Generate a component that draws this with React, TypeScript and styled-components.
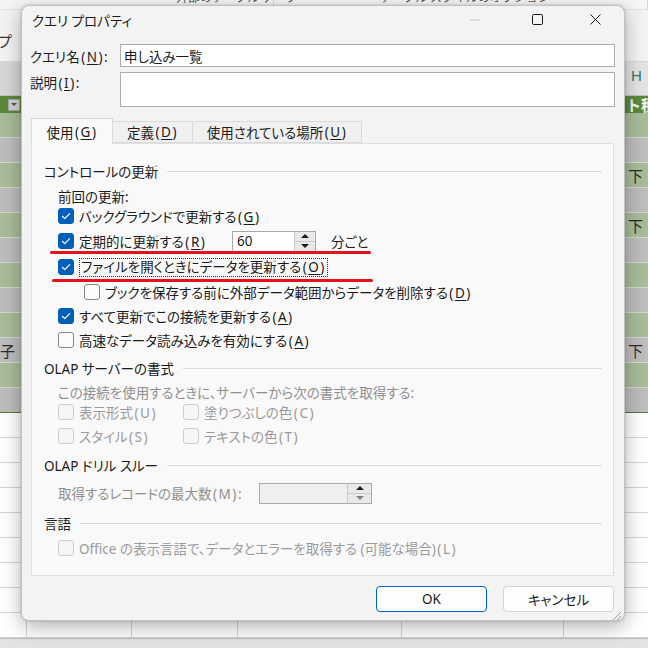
import React from "react";
import styled, { createGlobalStyle } from "styled-components";

const Global = createGlobalStyle`
  html, body { margin: 0; padding: 0; }
  body {
    width: 648px; height: 648px; overflow: hidden;
    font-family: "Noto Sans", "Noto Sans CJK JP", sans-serif;
    color: #1b1b1b;
  }
`;

const Page = styled.div`
  position: relative;
  width: 648px;
  height: 648px;
  overflow: hidden;
  background: #fff;
`;

/* ---------- background spreadsheet ---------- */
const Sheet = styled.div`
  display: flex;
  flex-direction: column;
  width: 648px;
  font-family: "Noto Sans CJK JP", sans-serif;
`;

const Ribbon = styled.div`
  display: flex;
  height: 9px;
  background: #f5f5f5;
  border-bottom: 1px solid #e1e1e1;
  overflow: hidden;
`;

const RibbonGroup = styled.div<{ $w: number; $pad: number }>`
  width: ${(p) => p.$w}px;
  padding-left: ${(p) => p.$pad}px;
  box-sizing: border-box;
  border-right: 1px solid #d6d6d6;
  font-size: 12px;
  line-height: 16px;
  color: #5a5a5a;
  white-space: nowrap;
  margin-top: -11px;
  height: 20px;
`;

const RibbonBar = styled.div`
  height: 52px;
  background: #f3f3f3;
  border-bottom: 1px solid #d8d8d8;
  box-sizing: border-box;
  font-size: 15px;
  line-height: 18px;
  padding-top: 22px;
  margin-left: -3px;
  color: #333;
`;

const ColHeader = styled.div`
  height: 34px;
  background: #d7d7d7;
  display: flex;
  justify-content: flex-end;
  align-items: center;
  border-bottom: 1px solid #c4c4c4;
  box-sizing: border-box;
`;

const ColLetter = styled.div`
  width: 22px;
  height: 100%;
  background: #e4e4e4;
  color: #2a7a63;
  font-family: "Liberation Sans", sans-serif;
  font-size: 15px;
  display: flex;
  align-items: center;
  padding-left: 5px;
  padding-bottom: 6px;
  box-sizing: border-box;
`;

const TableHeader = styled.div`
  height: 17px;
  background: #5b893b;
  display: flex;
  justify-content: space-between;
  align-items: center;
  overflow: hidden;
`;

const DropBtn = styled.div`
  width: 12px;
  height: 12px;
  margin-left: 8px;
  background: #d2d2d2;
  border: 1px solid #a5a5a5;
  box-sizing: border-box;
  display: flex;
  align-items: center;
  justify-content: center;
  &::after {
    content: "";
    border-left: 3px solid transparent;
    border-right: 3px solid transparent;
    border-top: 3px solid #555;
  }
`;

const HeaderText = styled.div`
  width: 22px;
  color: #f4f4f4;
  font-size: 15px;
  font-weight: 700;
  line-height: 17px;
  white-space: nowrap;
  overflow: hidden;
  padding-left: 2px;
`;

const BandRow = styled.div<{ $alt: boolean }>`
  height: 25px;
  box-sizing: border-box;
  background: ${(p) => (p.$alt ? "#bdbdbd" : "#a8bc9a")};
  border-bottom: 1px solid #d3dccc;
  display: flex;
  justify-content: space-between;
  align-items: center;
  font-size: 15px;
  color: #2a2a2a;
  &:last-child {
    border-bottom: 1px solid #4f7d34;
  }
`;

const BandCell = styled.div<{ $w: number }>`
  width: ${(p) => p.$w}px;
  overflow: hidden;
  white-space: nowrap;
`;

const GridRow = styled.div`
  height: 25px;
  display: flex;
  box-sizing: border-box;
  border-bottom: 1px solid #d4d4d4;
`;

const GridCell = styled.div<{ $w: number }>`
  width: ${(p) => p.$w}px;
  border-right: 1px solid #d4d4d4;
  box-sizing: border-box;
  &:last-child { border-right: none; }
`;

const SheetFooter = styled.div`
  height: 10px;
  background: #e3e3e3;
  border-top: 1px solid #bcbcbc;
`;

/* ---------- dialog ---------- */
const Dialog = styled.div`
  position: absolute;
  left: 21px;
  top: 5px;
  width: 604px;
  height: 616px;
  box-sizing: border-box;
  background: #f3f3f3;
  border: 1px solid #c2c2c2;
  border-radius: 8px;
  box-shadow: 0 6px 20px rgba(0, 0, 0, 0.3), 0 0 3px rgba(0, 0, 0, 0.18);
  display: flex;
  flex-direction: column;
  font-size: 13.5px;
  font-feature-settings: "palt" 1;
`;

const TitleBar = styled.div`
  height: 27px;
  display: flex;
  align-items: center;
  padding-left: 10px;
`;

const Title = styled.div`
  flex: 1;
  font-size: 13.5px;
  color: #1b1b1b;
`;

const CaptionBtn = styled.div<{ $w: number }>`
  width: ${(p) => p.$w}px;
  height: 27px;
  display: flex;
  align-items: center;
  justify-content: center;
`;

const Body = styled.div`
  flex: 1;
  display: flex;
  flex-direction: column;
  padding: 11px 9px 0 8px;
`;

const FieldRow = styled.div<{ $mt?: number }>`
  display: grid;
  grid-template-columns: 90px 1fr;
  margin-top: ${(p) => p.$mt ?? 0}px;
`;

const FieldLabel = styled.div<{ $top?: boolean }>`
  display: flex;
  align-items: ${(p) => (p.$top ? "flex-start" : "center")};
  white-space: nowrap;
`;

const TextBox = styled.div<{ $h: number }>`
  height: ${(p) => p.$h}px;
  box-sizing: border-box;
  background: #fff;
  border: 1px solid #acacac;
  padding-left: 3px;
  display: flex;
  align-items: center;
`;

const Ak = styled.span`
  text-decoration: underline;
  text-underline-offset: 2px;
  text-decoration-thickness: 1px;
`;

const KeyWrap = styled.span`
  letter-spacing: 1.5px;
  margin-left: 1.5px;
`;

const Key: React.FC<{ k: string }> = ({ k }) => (
  <KeyWrap>
    (<Ak>{k}</Ak>)
  </KeyWrap>
);

const TabArea = styled.div`
  margin: 11px 1px 0 1px;
  display: flex;
  flex-direction: column;
`;

const TabStrip = styled.div`
  display: flex;
  align-items: flex-end;
  height: 25px;
  position: relative;
  z-index: 1;
`;

const Tab = styled.div<{ $w: number; $active?: boolean }>`
  width: ${(p) => p.$w}px;
  height: ${(p) => (p.$active ? 26 : 22)}px;
  box-sizing: border-box;
  margin-bottom: ${(p) => (p.$active ? -1 : 0)}px;
  background: ${(p) => (p.$active ? "#f9f9f9" : "#f0f0f0")};
  border: 1px solid #dadada;
  border-bottom: ${(p) => (p.$active ? "none" : "1px solid #dadada")};
  margin-left: ${(p) => (p.$active ? 0 : -1)}px;
  display: flex;
  align-items: center;
  justify-content: center;
  white-space: nowrap;
  padding-top: ${(p) => (p.$active ? 1 : 0)}px;
`;

const Panel = styled.div`
  height: 433px;
  box-sizing: border-box;
  background: #f9f9f9;
  border: 1px solid #e0e0e0;
  padding: 17px 11px 0 12px;
  display: flex;
  flex-direction: column;
`;

const Row = styled.div<{ $mt?: number; $indent?: number; $muted?: boolean }>`
  height: 20px;
  margin-top: ${(p) => p.$mt ?? 0}px;
  margin-left: ${(p) => p.$indent ?? 0}px;
  display: flex;
  align-items: center;
  white-space: nowrap;
  color: ${(p) => (p.$muted ? "#8f8f8f" : "#1b1b1b")};
`;

const GroupLabel = styled(Row)`
  &::after {
    content: "";
    flex: 1;
    height: 0;
    border-top: 1px solid #dcdcdc;
    margin-left: 9px;
  }
`;

const CheckItem = styled.div<{ $disabled?: boolean; $w?: number }>`
  display: flex;
  align-items: center;
  gap: 5px;
  width: ${(p) => (p.$w ? `${p.$w}px` : "auto")};
  color: ${(p) => (p.$disabled ? "#9a9a9a" : "#1b1b1b")};
`;

const Box = styled.span<{ $checked?: boolean; $disabled?: boolean }>`
  width: 16px;
  height: 16px;
  box-sizing: border-box;
  border-radius: 3px;
  flex-shrink: 0;
  display: flex;
  align-items: center;
  justify-content: center;
  background: ${(p) => (p.$checked ? "#005fb8" : p.$disabled ? "#f6f6f6" : "#fbfbfb")};
  border: 1px solid
    ${(p) => (p.$checked ? "#005fb8" : p.$disabled ? "#cdcdcd" : "#878787")};
`;

const Focus = styled.span`
  border: 1px dotted #2a2a2a;
  padding: 0 1px;
  line-height: 17px;
`;

const Spin = styled.div<{ $w: number; $disabled?: boolean }>`
  width: ${(p) => p.$w}px;
  height: 21px;
  box-sizing: border-box;
  border: 1px solid #a9a9a9;
  background: ${(p) => (p.$disabled ? "#efefef" : "#fff")};
  display: flex;
`;

const SpinValue = styled.div`
  flex: 1;
  display: flex;
  align-items: center;
  padding-left: 4px;
  font-size: 13.5px;
`;

const SpinButtons = styled.div<{ $w: number }>`
  width: ${(p) => p.$w}px;
  display: flex;
  flex-direction: column;
  border-left: 1px solid #c9c9c9;
`;

const SpinBtn = styled.div<{ $up?: boolean; $gray?: boolean }>`
  flex: 1;
  background: #e9e9e9;
  border-top: ${(p) => (p.$up ? "none" : "1px solid #c9c9c9")};
  display: flex;
  align-items: center;
  justify-content: center;
  &::after {
    content: "";
    border-left: 4px solid transparent;
    border-right: 4px solid transparent;
    ${(p) =>
      p.$up
        ? `border-bottom: 4px solid ${p.$gray ? "#6d6d6d" : "#1a1a1a"};`
        : `border-top: 4px solid ${p.$gray ? "#7d7d7d" : "#1a1a1a"};`}
  }
`;

const Unit = styled.span`
  margin-left: 15px;
`;

const FixedLabel = styled.div<{ $w: number }>`
  width: ${(p) => p.$w}px;
`;

const ButtonRow = styled.div`
  display: flex;
  justify-content: flex-end;
  gap: 16px;
  margin: 10px 1px 0 0;
`;

const Button = styled.div<{ $primary?: boolean }>`
  width: 111px;
  height: 26px;
  box-sizing: border-box;
  border-radius: 4px;
  background: #fdfdfd;
  border: 1px solid ${(p) => (p.$primary ? "#0067c0" : "#d3d3d3")};
  display: flex;
  align-items: center;
  justify-content: center;
`;

const Grip = styled.div`
  position: absolute;
  right: 2px;
  bottom: 2px;
  width: 11px;
  height: 11px;
`;

const RedLine = styled.div`
  position: absolute;
  height: 3px;
  border-radius: 2px;
  background: #e3121b;
`;

const Check = () => (
  <svg width="12" height="12" viewBox="0 0 12 12">
    <path d="M2.4 6.3 L4.8 8.6 L9.6 3.6" fill="none" stroke="#fff" strokeWidth="1.2" strokeLinecap="round" strokeLinejoin="round" />
  </svg>
);

const CB: React.FC<{ checked?: boolean; disabled?: boolean; w?: number; children: React.ReactNode }> = ({
  checked,
  disabled,
  w,
  children,
}) => (
  <CheckItem $disabled={disabled} $w={w}>
    <Box $checked={checked} $disabled={disabled}>{checked && <Check />}</Box>
    <span>{children}</span>
  </CheckItem>
);

const gridWidths = [27, 105, 106, 164, 162, 84];
const rightMarks: Record<number, string> = { 2: "下", 4: "下", 9: "下" };
const leftMarks: Record<number, string> = { 9: "子" };

export default function App() {
  return (
    <Page>
      <Global />
      <Sheet>
        <Ribbon>
          <RibbonGroup $w={274} $pad={176}>外部のテーブル データ</RibbonGroup>
          <RibbonGroup $w={374} $pad={106}>テーブル スタイルのオプション</RibbonGroup>
        </Ribbon>
        <RibbonBar>プ</RibbonBar>
        <ColHeader>
          <ColLetter>H</ColLetter>
        </ColHeader>
        <TableHeader>
          <DropBtn />
          <HeaderText>ト種</HeaderText>
        </TableHeader>
        <div>
          {Array.from({ length: 12 }, (_, i) => (
            <BandRow key={i} $alt={i % 2 === 1}>
              <BandCell $w={20}>{leftMarks[i] ?? ""}</BandCell>
              <BandCell $w={20}>{rightMarks[i] ?? ""}</BandCell>
            </BandRow>
          ))}
        </div>
        {Array.from({ length: 9 }, (_, r) => (
          <GridRow key={r}>
            {gridWidths.map((w, c) => (
              <GridCell key={c} $w={w} />
            ))}
          </GridRow>
        ))}
        <SheetFooter />
      </Sheet>

      <Dialog>
        <TitleBar>
          <Title>クエリ プロパティ</Title>
          <CaptionBtn $w={66}>
            <svg width="10" height="2" viewBox="0 0 10 2">
              <line x1="0" y1="1" x2="10" y2="1" stroke="#c4c4c4" strokeWidth="1" />
            </svg>
          </CaptionBtn>
          <CaptionBtn $w={58}>
            <svg width="11" height="11" viewBox="0 0 11 11">
              <rect x="0.5" y="0.5" width="10" height="10" rx="1.2" fill="none" stroke="#1b1b1b" strokeWidth="1" />
            </svg>
          </CaptionBtn>
          <CaptionBtn $w={58}>
            <svg width="11" height="11" viewBox="0 0 11 11">
              <path d="M0.5 0.5 L10.5 10.5 M10.5 0.5 L0.5 10.5" stroke="#1b1b1b" strokeWidth="1" />
            </svg>
          </CaptionBtn>
        </TitleBar>

        <Body>
          <FieldRow>
            <FieldLabel>
              <span>
                クエリ名<Key k="N" />:
              </span>
            </FieldLabel>
            <TextBox $h={23}>申し込み一覧</TextBox>
          </FieldRow>
          <FieldRow $mt={5}>
            <FieldLabel $top>
              <span>
                説明<Key k="I" />:
              </span>
            </FieldLabel>
            <TextBox $h={35} />
          </FieldRow>

          <TabArea>
            <TabStrip>
              <Tab $w={82} $active>
                使用<Key k="G" />
              </Tab>
              <Tab $w={81}>
                定義<Key k="D" />
              </Tab>
              <Tab $w={170}>
                使用されている場所<Key k="U" />
              </Tab>
            </TabStrip>
            <Panel>
              <GroupLabel>コントロールの更新</GroupLabel>
              <Row $mt={5} $indent={14}>前回の更新:</Row>
              <Row $mt={0} $indent={14}>
                <CB checked>
                  バックグラウンドで更新する<Key k="G" />
                </CB>
              </Row>
              <Row $mt={5} $indent={14}>
                <CB checked w={174}>
                  定期的に更新する<Key k="R" />
                </CB>
                <Spin $w={84}>
                  <SpinValue>60</SpinValue>
                  <SpinButtons $w={20}>
                    <SpinBtn $up />
                    <SpinBtn />
                  </SpinButtons>
                </Spin>
                <Unit>分ごと</Unit>
              </Row>
              <Row $mt={6} $indent={14}>
                <CheckItem>
                  <Box $checked>
                    <Check />
                  </Box>
                  <Focus>
                    ファイルを開くときにデータを更新する<Key k="O" />
                  </Focus>
                </CheckItem>
              </Row>
              <Row $mt={5} $indent={40}>
                <CB>
                  ブックを保存する前に外部データ範囲からデータを削除する<Key k="D" />
                </CB>
              </Row>
              <Row $mt={4} $indent={14}>
                <CB checked>
                  すべて更新でこの接続を更新する<Key k="A" />
                </CB>
              </Row>
              <Row $mt={4} $indent={14}>
                <CB>
                  高速なデータ読み込みを有効にする<Key k="A" />
                </CB>
              </Row>

              <GroupLabel $mt={8}>OLAP サーバーの書式</GroupLabel>
              <Row $mt={4} $indent={14} $muted>
                この接続を使用するときに、サーバーから次の書式を取得する:
              </Row>
              <Row $mt={0} $indent={14}>
                <CB disabled w={125}>表示形式<KeyWrap>(U)</KeyWrap></CB>
                <CB disabled>塗りつぶしの色<KeyWrap>(C)</KeyWrap></CB>
              </Row>
              <Row $mt={4} $indent={14}>
                <CB disabled w={125}>スタイル<KeyWrap>(S)</KeyWrap></CB>
                <CB disabled>テキストの色<KeyWrap>(T)</KeyWrap></CB>
              </Row>

              <GroupLabel $mt={9}>OLAP ドリル スルー</GroupLabel>
              <Row $mt={8} $indent={14} $muted>
                <FixedLabel $w={201}>
                  取得するレコードの最大数<KeyWrap>(M)</KeyWrap>:
                </FixedLabel>
                <Spin $w={113} $disabled>
                  <SpinValue />
                  <SpinButtons $w={23}>
                    <SpinBtn $up />
                    <SpinBtn $gray />
                  </SpinButtons>
                </Spin>
              </Row>

              <GroupLabel $mt={10}>言語</GroupLabel>
              <Row $mt={5} $indent={14}>
                <CB disabled>
                  Office の表示言語で、データとエラーを取得する (可能な場合)<KeyWrap>(L)</KeyWrap>
                </CB>
              </Row>
            </Panel>
          </TabArea>

          <ButtonRow>
            <Button $primary>OK</Button>
            <Button>キャンセル</Button>
          </ButtonRow>
        </Body>

        <Grip>
          <svg width="11" height="11" viewBox="0 0 11 11">
            <path d="M10 2 L2 10 M10 6 L6 10" stroke="#9a9a9a" strokeWidth="1" />
          </svg>
        </Grip>
      </Dialog>

      <RedLine style={{ left: 50, top: 251, width: 321 }} />
      <RedLine style={{ left: 52, top: 279, width: 321 }} />
    </Page>
  );
}
